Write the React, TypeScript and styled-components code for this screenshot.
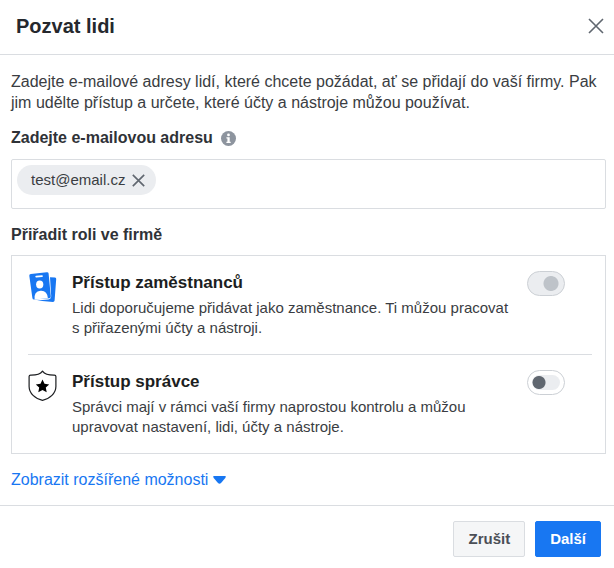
import React, { useState } from "react";
import styled, { createGlobalStyle } from "styled-components";

const GlobalStyle = createGlobalStyle`
  * { box-sizing: border-box; }
  body {
    margin: 0;
    background: #fff;
    color: #3a3d42;
    font-family: "Liberation Sans", Arial, sans-serif;
    font-size: 16px;
    line-height: 22px;
  }
  button { font: inherit; cursor: pointer; }
`;

const Dialog = styled.form`
  display: flex;
  flex-direction: column;
`;

const Header = styled.header`
  display: flex;
  align-items: center;
  justify-content: space-between;
  padding: 12px 10px 14px 16px;
  border-bottom: 1px solid #dadde1;
`;

const Title = styled.h1`
  margin: 0;
  font-size: 20px;
  line-height: 28px;
  font-weight: 700;
  color: #25282d;
`;

const IconButton = styled.button`
  display: flex;
  padding: 0;
  border: 0;
  background: none;
  color: #606770;
`;

const Body = styled.main`
  display: flex;
  flex-direction: column;
  padding: 16px 8px 14px 11px;
`;

const Intro = styled.p`
  margin: 0 0 14px;
  line-height: 21px;
`;

const FieldHeader = styled.div`
  display: flex;
  align-items: center;
  gap: 8px;
  margin-bottom: 10px;
`;

const FieldLabel = styled.label`
  color: #2f3237;
  font-weight: 700;
`;

const SectionTitle = styled.h2`
  margin: 0 0 9px;
  font-size: 16px;
  line-height: 22px;
  font-weight: 700;
  color: #2f3237;
`;

const EmailBox = styled.div`
  display: flex;
  align-items: flex-start;
  gap: 8px;
  padding: 5px;
  min-height: 50px;
  margin-bottom: 15px;
  border: 1px solid #dadde1;
  border-radius: 2px;
`;

const Chip = styled.span`
  display: flex;
  align-items: center;
  gap: 7px;
  height: 30px;
  padding: 0 11px 0 14px;
  border-radius: 15px;
  background: #ebedf0;
  font-size: 15px;
`;

const EmailInput = styled.input`
  flex: 1;
  min-width: 0;
  height: 30px;
  border: 0;
  outline: 0;
  font: inherit;
`;

const RoleList = styled.section`
  padding: 0 13px 0 16px;
  border: 1px solid #dadde1;
`;

const Role = styled.div`
  display: flex;
  align-items: flex-start;
  padding: 15px 27px 16px 0;
  & + & { border-top: 1px solid #dadde1; }
`;

const RoleIcon = styled.svg`
  flex: none;
  width: 30px;
  height: 32px;
  margin-right: 14px;
`;

const RoleText = styled.label`
  flex: 1;
  padding-right: 16px;
`;

const RoleName = styled.strong`
  display: block;
  font-size: 17px;
  line-height: 24px;
  margin-bottom: 3px;
  color: #1c1e21;
`;

const RoleInfo = styled.span`
  display: block;
  font-size: 15px;
  line-height: 20px;
`;

const Switch = styled.input`
  appearance: none;
  flex: none;
  display: flex;
  align-items: center;
  width: 38px;
  height: 25px;
  margin: 0;
  padding: 4px;
  border: 1px solid #ccd0d5;
  border-radius: 13px;
  background: #fff;
  &::before {
    content: "";
    width: 28px;
    height: 15px;
    border-radius: 8px;
    background: radial-gradient(circle at 7px 50%, #606770 6px, #ebedf0 7px);
  }
  &:checked { background: #ebedf0; }
  &:checked::before {
    background: radial-gradient(circle at 19px 50%, #bec3c9 7px, #ebedf0 8px);
  }
`;

const MoreLink = styled.a`
  display: flex;
  align-items: center;
  gap: 5px;
  align-self: flex-start;
  margin-top: 15px;
  color: #1877f2;
  text-decoration: none;
`;

const Footer = styled.footer`
  display: flex;
  justify-content: flex-end;
  gap: 10px;
  padding: 15px 13px 11px;
  border-top: 1px solid #dadde1;
`;

const Button = styled.button<{ $primary?: boolean }>`
  height: 36px;
  padding: 0 14px;
  border: 1px solid ${(p) => (p.$primary ? "#1877f2" : "#dadde1")};
  border-radius: 2px;
  background: ${(p) => (p.$primary ? "#1877f2" : "#f5f6f7")};
  color: ${(p) => (p.$primary ? "#fff" : "#4b4f56")};
  font-size: 15px;
  font-weight: 700;
`;

const Cross = ({ size, weight }: { size: number; weight: number }) => (
  <svg width={size} height={size} viewBox="0 0 16 16" aria-hidden="true">
    <path d="M1 1 15 15M15 1 1 15" stroke="currentColor" strokeWidth={weight} />
  </svg>
);

const InfoIcon = () => (
  <svg width="15" height="15" viewBox="0 0 15 15" aria-hidden="true">
    <circle cx="7.5" cy="7.5" r="7.5" fill="#8d949e" />
    <circle cx="7.5" cy="3.9" r="1.4" fill="#fff" />
    <path d="M5.4 6.2h3.3v4.6h1v1.2H5.4v-1.2h1V7.4h-1z" fill="#fff" />
  </svg>
);

const BadgeIcon = () => (
  <RoleIcon viewBox="0 0 30 32" aria-hidden="true">
    <path d="M22 6.2 27 6.6Q28.3 6.8 28.2 8L26.6 29.6Q26.4 31 25 31L9 29.6 20.5 28.4Q23.3 28 23.2 25Z" fill="#1877f2" />
    <path d="M2.9 2.9 18.8 1.2Q20.4 1 20.6 2.6L22.8 25.4Q22.9 27 21.3 27.2L6.2 28.6Q4.6 28.7 4.4 27.1L1.3 4.8Q1.1 3.1 2.9 2.9Z" fill="#1877f2" />
    <path d="M8.2 5.7 14 5.1" stroke="#fff" strokeWidth="1.7" strokeLinecap="round" />
    <ellipse cx="11.7" cy="13.4" rx="3.6" ry="4" fill="#fff" />
    <path d="M6.6 28.6Q5.7 20.2 12.5 19.7 19.3 19.2 19.9 27.3Z" fill="#fff" />
  </RoleIcon>
);

const ShieldIcon = () => (
  <RoleIcon viewBox="0 0 30 32" aria-hidden="true">
    <path
      d="M14.5 1.1C16.3 3.6 21.5 5.3 26.4 5.2 27.3 5.2 27.9 5.7 27.9 6.6V16.5C27.9 23.2 21.8 28.9 14.5 30.3 7.2 28.9 1.1 23.2 1.1 16.5V6.6C1.1 5.7 1.7 5.2 2.6 5.2 7.5 5.3 12.7 3.6 14.5 1.1Z"
      fill="none" stroke="#1c1e21" strokeWidth="1.2" strokeLinejoin="round"
    />
    <path d="m14.5 9.5 2 4.3 4.7.6-3.4 3.2.9 4.7-4.2-2.3-4.2 2.3.9-4.7-3.4-3.2 4.7-.6z" fill="#000" />
  </RoleIcon>
);

export default function App() {
  const [employee, setEmployee] = useState(true);
  const [admin, setAdmin] = useState(false);
  return (
    <Dialog onSubmit={(e) => e.preventDefault()}>
      <GlobalStyle />
      <Header>
        <Title>Pozvat lidi</Title>
        <IconButton type="button" aria-label="Zavřít"><Cross size={16} weight={1.6} /></IconButton>
      </Header>
      <Body>
        <Intro>
          Zadejte e-mailové adresy lidí, které chcete požádat, ať se přidají do vaší firmy. Pak jim udělte přístup a
          určete, které účty a nástroje můžou používat.
        </Intro>
        <FieldHeader>
          <FieldLabel htmlFor="email">Zadejte e-mailovou adresu</FieldLabel>
          <InfoIcon />
        </FieldHeader>
        <EmailBox>
          <Chip>
            test@email.cz
            <IconButton type="button" aria-label="Odebrat"><Cross size={13} weight={2} /></IconButton>
          </Chip>
          <EmailInput id="email" type="email" />
        </EmailBox>
        <SectionTitle>Přiřadit roli ve firmě</SectionTitle>
        <RoleList>
          <Role>
            <BadgeIcon />
            <RoleText htmlFor="employee">
              <RoleName>Přístup zaměstnanců</RoleName>
              <RoleInfo>Lidi doporučujeme přidávat jako zaměstnance. Ti můžou pracovat s přiřazenými účty a nástroji.</RoleInfo>
            </RoleText>
            <Switch id="employee" type="checkbox" role="switch" checked={employee} onChange={() => setEmployee(!employee)} />
          </Role>
          <Role>
            <ShieldIcon />
            <RoleText htmlFor="admin">
              <RoleName>Přístup správce</RoleName>
              <RoleInfo>Správci mají v rámci vaší firmy naprostou kontrolu a můžou upravovat nastavení, lidi, účty a nástroje.</RoleInfo>
            </RoleText>
            <Switch id="admin" type="checkbox" role="switch" checked={admin} onChange={() => setAdmin(!admin)} />
          </Role>
        </RoleList>
        <MoreLink href="#more">
          Zobrazit rozšířené možnosti
          <svg width="13" height="8" viewBox="0 0 13 8" aria-hidden="true">
            <path d="M.5 0h12q.6 1-.2 2L8 7q-1.5 1.6-3 0L.7 2Q-.1 1 .5 0z" fill="currentColor" />
          </svg>
        </MoreLink>
      </Body>
      <Footer>
        <Button type="button">Zrušit</Button>
        <Button type="submit" $primary>Další</Button>
      </Footer>
    </Dialog>
  );
}
